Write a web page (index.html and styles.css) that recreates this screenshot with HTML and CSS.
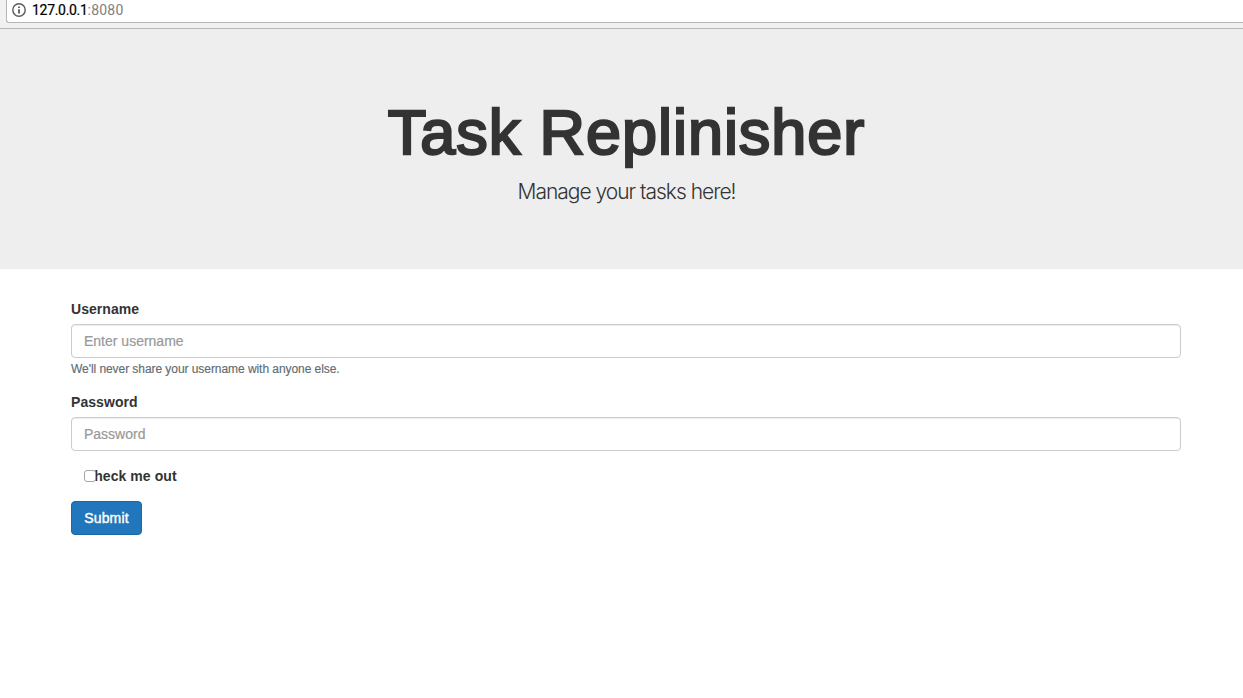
FILE: index.html
```html
<!DOCTYPE html>
<html lang="en">
<head>
<meta charset="utf-8">
<title>Task Replinisher</title>
<link rel="stylesheet" href="styles.css">
</head>
<body>
<div class="toolbar">
  <div class="address">
    <svg class="info" width="14" height="14" viewBox="0 0 14 14" fill="none" stroke="#5a5a5a">
      <circle cx="7" cy="7" r="6.2" stroke-width="1.4"/>
      <path d="M7 6.2v4.2M7 3.4v1.7" stroke-width="1.8"/>
    </svg>
    <span class="url"><span class="host">127.0.0.1</span><span class="port">:8080</span></span>
  </div>
</div>
<header class="jumbotron">
  <h1 class="title">Task Replinisher</h1>
  <p class="lead">Manage your tasks here!</p>
</header>
<form class="form">
  <div class="group">
    <label class="label" for="username">Username</label>
    <input class="control" id="username" type="text" placeholder="Enter username">
    <small class="help">We'll never share your username with anyone else.</small>
  </div>
  <div class="group">
    <label class="label" for="password">Password</label>
    <input class="control" id="password" type="password" placeholder="Password">
  </div>
  <label class="check"><input class="box" type="checkbox">Check me out</label>
  <button class="submit" type="button">Submit</button>
</form>
</body>
</html>
```
FILE: styles.css
```css
* { box-sizing: border-box; }
body {
  margin: 0;
  background: #fff;
  color: #333;
  font: 14px/20px "Liberation Sans", Arial, sans-serif;
}
.toolbar {
  height: 29px;
  padding-left: 6px;
  background: #f1f1f1;
  border-bottom: 1px solid #b6b6b6;
}
.address {
  display: flex;
  align-items: flex-start;
  gap: 6px;
  height: 23px;
  padding: 3px 0 0 5px;
  background: #fff;
  border: solid #b6b6b6;
  border-width: 0 0 1px 1px;
  border-radius: 0 0 0 3px;
}
.info { display: block; }
.url {
  margin-top: -1px;
  font: 14px/16px Roboto, sans-serif;
}
.host {
  color: #000;
  letter-spacing: -0.3px;
  -webkit-text-stroke: 0.2px #000;
}
.port { color: #808080; letter-spacing: 0.2px; }
.jumbotron {
  height: 240px;
  padding: 68px 0 0 10px;
  background: #eee;
  text-align: center;
}
.title {
  margin: 0;
  font-size: 63px;
  font-weight: 400;
  line-height: 70px;
  letter-spacing: 0.95px;
  -webkit-text-stroke: 2.4px #333;
}
.lead {
  margin: 9px 0 0;
  font: 300 21px/32px Inter, sans-serif;
  letter-spacing: -1px;
}
.form { padding: 30px 62px 0 71px; }
.group { margin-bottom: 15px; }
.label {
  display: block;
  height: 25px;
  font-weight: 700;
  letter-spacing: 0.06px;
}
.control {
  display: block;
  width: 100%;
  height: 34px;
  padding: 6px 12px;
  border: 1px solid #ccc;
  border-radius: 4px;
  background: #fff;
  box-shadow: inset 0 1px 1px rgba(0, 0, 0, .075);
  font: inherit;
}
.control::placeholder { color: #999; opacity: 1; -webkit-text-stroke: 0.2px #999; }
.help {
  display: block;
  height: 19px;
  padding-top: 1px;
  font-size: 12px;
  letter-spacing: -0.06px;
  color: #636c72;
  -webkit-text-stroke: 0.15px #636c72;
}
.check {
  display: flex;
  position: relative;
  width: max-content;
  height: 20px;
  margin-bottom: 15px;
  padding-left: 13px;
  font-weight: 700;
  letter-spacing: 0.07px;
}
.box {
  position: absolute;
  left: 13px;
  top: 4px;
  width: 12px;
  height: 12px;
  margin: 0;
  appearance: none;
  background: #fff;
  border: 1px solid #a6a6a6;
  border-radius: 3px;
}
.submit {
  display: block;
  width: 71px;
  height: 34px;
  padding: 0;
  border: 1px solid #1e68a6;
  border-radius: 4px;
  background: #2276bb;
  color: #fff;
  font: inherit;
  letter-spacing: 0.15px;
  -webkit-text-stroke: 0.4px #fff;
}
```
